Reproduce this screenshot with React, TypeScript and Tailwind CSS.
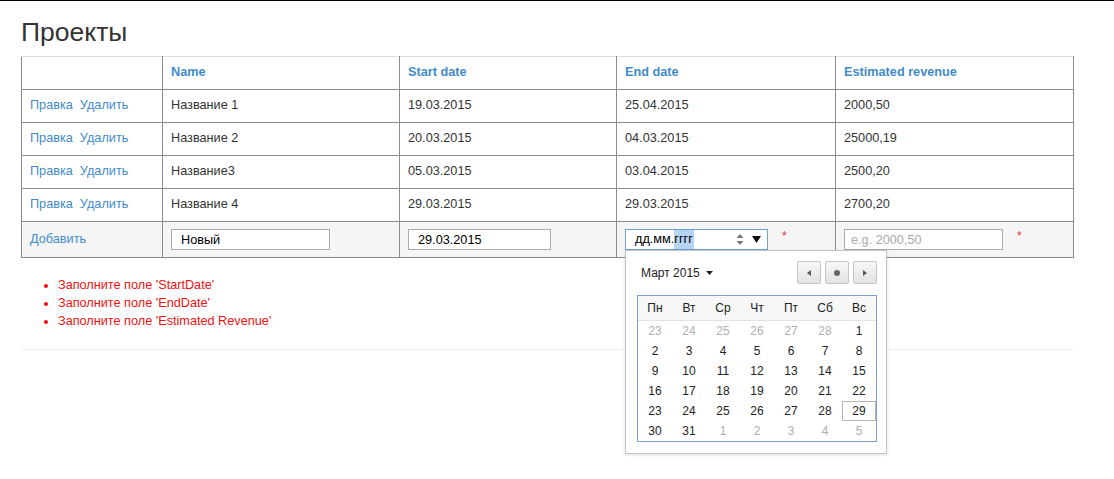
import React from "react";

const rows = [
  { name: "Название 1", start: "19.03.2015", end: "25.04.2015", revenue: "2000,50" },
  { name: "Название 2", start: "20.03.2015", end: "04.03.2015", revenue: "25000,19" },
  { name: "Название3", start: "05.03.2015", end: "03.04.2015", revenue: "2500,20" },
  { name: "Название 4", start: "29.03.2015", end: "29.03.2015", revenue: "2700,20" },
];

const errors = [
  "Заполните поле 'StartDate'",
  "Заполните поле 'EndDate'",
  "Заполните поле 'Estimated Revenue'",
];

const dayNames = ["Пн", "Вт", "Ср", "Чт", "Пт", "Сб", "Вс"];

type Day = { n: number; muted: boolean };

function buildWeeks(): Day[][] {
  const days: Day[] = [];
  for (let d = 23; d <= 28; d++) days.push({ n: d, muted: true });
  for (let d = 1; d <= 31; d++) days.push({ n: d, muted: false });
  for (let d = 1; d <= 5; d++) days.push({ n: d, muted: true });
  const weeks: Day[][] = [];
  for (let i = 0; i < days.length; i += 7) weeks.push(days.slice(i, i + 7));
  return weeks;
}

const cell = "h-[33px] border border-[#8c8c8c] px-2 align-middle";

function NavButton({ children }: { children: React.ReactNode }) {
  return (
    <button className="flex h-[23px] w-[24px] items-center justify-center rounded-[2px] border border-[#c6c6c6] bg-gradient-to-b from-[#f8f8f8] to-[#e2e2e2]">
      {children}
    </button>
  );
}

function DatePicker() {
  const weeks = buildWeeks();
  return (
    <div className="absolute left-0 top-full z-10 w-[262px] border border-[#c4c4c4] bg-white pb-[11px] pl-[11px] pr-[9px] pt-[10px] shadow-[0_1px_3px_rgba(0,0,0,0.12)]">
      <div className="flex h-[23px] items-center justify-between">
        <div className="flex items-center gap-[6px] pl-[4px] text-[12px] text-[#222]">
          <span>Март 2015</span>
          <svg width="7" height="4" viewBox="0 0 7 4">
            <path d="M0 0h7L3.5 4z" fill="#222" />
          </svg>
        </div>
        <div className="flex gap-[4px]">
          <NavButton>
            <svg width="4" height="6" viewBox="0 0 4 6">
              <path d="M4 0v6L0 3z" fill="#555" />
            </svg>
          </NavButton>
          <NavButton>
            <span className="block h-[6px] w-[6px] rounded-full bg-[#666]" />
          </NavButton>
          <NavButton>
            <svg width="4" height="6" viewBox="0 0 4 6">
              <path d="M0 0v6l4-3z" fill="#555" />
            </svg>
          </NavButton>
        </div>
      </div>
      <div className="mt-[11px] border border-[#7c9fd3]">
        <div className="grid h-[25px] grid-cols-7 items-center border-b border-[#e3e3e3] bg-[#f7f7f7] text-center text-[12px] text-[#222]">
          {dayNames.map((d) => (
            <div key={d}>{d}</div>
          ))}
        </div>
        {weeks.map((week, i) => (
          <div key={i} className="grid grid-cols-7 text-center text-[12px]">
            {week.map((day, j) => {
              const selected = !day.muted && day.n === 29;
              return (
                <div
                  key={j}
                  className={
                    "flex h-[20px] items-center justify-center " +
                    (day.muted ? "text-[#b0b0b0] " : "text-[#222] ") +
                    (selected ? "border border-[#b4b4b4]" : "")
                  }
                >
                  {day.n}
                </div>
              );
            })}
          </div>
        ))}
      </div>
    </div>
  );
}

export default function App() {
  return (
    <div className="min-h-screen bg-white font-['Liberation_Sans',Arial,sans-serif] text-[12.7px] text-[#333]">
      <div className="h-px bg-black" />
      <div className="px-[21px] pr-[41px]">
        <h1 className="pb-[9px] pt-[16px] text-[26.5px] leading-[30px] text-[#333]">Проекты</h1>

        <table className="w-full table-fixed border-collapse">
          <colgroup>
            <col className="w-[141px]" />
            <col className="w-[237px]" />
            <col className="w-[217px]" />
            <col className="w-[219px]" />
            <col className="w-[238px]" />
          </colgroup>
          <thead>
            <tr>
              {["", "Name", "Start date", "End date", "Estimated revenue"].map((h, i) => (
                <th key={i} className={cell + " border-t-[#dddddd] text-left font-bold text-[#428bca]"}>
                  {h}
                </th>
              ))}
            </tr>
          </thead>
          <tbody>
            {rows.map((r) => (
              <tr key={r.name}>
                <td className={cell}>
                  <span className="text-[#428bca]">Правка</span>
                  <span className="ml-[7px] text-[#428bca]">Удалить</span>
                </td>
                <td className={cell}>{r.name}</td>
                <td className={cell}>{r.start}</td>
                <td className={cell}>{r.end}</td>
                <td className={cell}>{r.revenue}</td>
              </tr>
            ))}
            <tr className="bg-[#f5f5f5]">
              <td className={cell + " h-[36px] align-top pt-[8px]"}>
                <span className="text-[#428bca]">Добавить</span>
              </td>
              <td className={cell + " h-[36px]"}>
                <input
                  readOnly
                  value="Новый"
                  className="block h-[21px] w-[159px] border border-[#ababab] bg-white px-[9px] text-[12.7px] text-black outline-none"
                />
              </td>
              <td className={cell + " h-[36px]"}>
                <input
                  readOnly
                  value="29.03.2015"
                  className="block h-[21px] w-[143px] border border-[#ababab] bg-white px-[9px] text-[12.7px] text-black outline-none"
                />
              </td>
              <td className={cell + " h-[36px]"}>
                <div className="flex items-start">
                  <div className="relative">
                    <div className="flex h-[21px] w-[143px] items-center border border-[#6d9fd8] bg-white pl-[9px] pr-[6px] text-[12.7px] text-black">
                      <span>дд.мм.</span>
                      <span className="bg-[#b7d3f3] pr-px">гггг</span>
                      <span className="ml-auto flex items-center gap-[8px]">
                        <svg width="8" height="11" viewBox="0 0 8 11">
                          <path d="M4 0l3.5 4h-7z" fill="#777" />
                          <path d="M4 11l3.5-4h-7z" fill="#777" />
                        </svg>
                        <svg width="9" height="7" viewBox="0 0 9 7">
                          <path d="M0 0h9L4.5 7z" fill="#111" />
                        </svg>
                      </span>
                    </div>
                    <DatePicker />
                  </div>
                  <span className="ml-[14px] text-[12px] leading-[14px] text-[#e0303a]">*</span>
                </div>
              </td>
              <td className={cell + " h-[36px]"}>
                <div className="flex items-start">
                  <input
                    readOnly
                    placeholder="e.g. 2000,50"
                    className="block h-[21px] w-[159px] border border-[#ababab] bg-white px-[6px] text-[12.7px] text-black outline-none placeholder:text-[#a9a9a9]"
                  />
                  <span className="ml-[14px] text-[12px] leading-[14px] text-[#e0303a]">*</span>
                </div>
              </td>
            </tr>
          </tbody>
        </table>

        <ul className="mt-[18px] list-disc pl-[37px] text-[12.7px] leading-[18px] text-[#ee1111] marker:text-[#ee1111]">
          {errors.map((e) => (
            <li key={e}>{e}</li>
          ))}
        </ul>
        <div className="mt-[19px] h-px bg-[#eeeeee]" />
      </div>
    </div>
  );
}
